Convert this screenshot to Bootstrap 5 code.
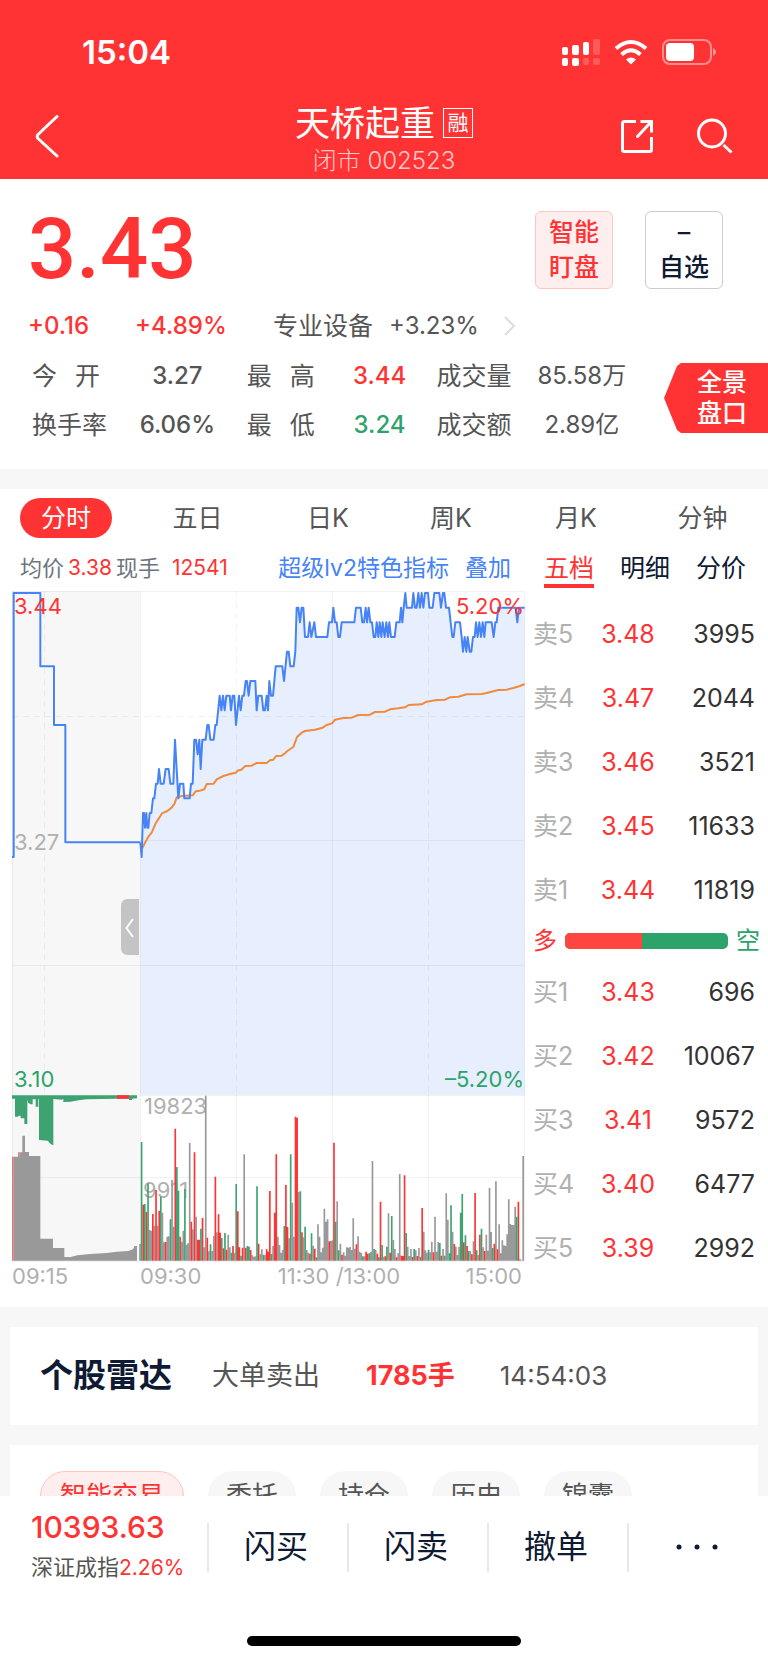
<!DOCTYPE html>
<html lang="zh-CN">
<head>
<meta charset="utf-8">
<meta name="viewport" content="width=device-width, initial-scale=1">
<title>天桥起重 002523</title>
<link href="https://cdn.jsdelivr.net/npm/bootstrap@5.3.0/dist/css/bootstrap.min.css" rel="stylesheet">
<style>
:root { --up: #ff3333; --down: #2ca36a; --ink: #0f1a33; --text: #555; --mute: #b0b0b0; --line-blue: #4683f7; --band: #f7f7f7; }
body { font-family: Inter, "Noto Sans CJK SC", sans-serif; font-size: 24px; line-height: 32px; color: var(--text); background: var(--band); }
a { text-decoration: none; color: inherit; }
button { font: inherit; color: inherit; background: none; border: 0; padding: 0; }
.up { color: var(--up); }
.down { color: var(--down); }
.ink { color: var(--ink); }
.light { font-weight: 300; }

.app-head { background: var(--up); color: #fff; }
.status { height: 102px; padding: 2px 52px 0 82px; }
.clock { font-size: 33px; font-weight: 600; }
.title-bar { height: 77px; padding: 0 35px; display: grid; grid-template-columns: 1fr auto 1fr; align-items: center; }
.title-bar h1 { font-size: 35px; line-height: 40px; font-weight: 400; margin: 0; }
.title-side { padding-bottom: 10px; }
.head-icons { gap: 42px; }
.tag-box { width: 30px; height: 30px; border: 1px solid #fff; font-size: 21px; line-height: 27px; text-align: center; }
.sub-title { color: #ffc9c9; line-height: 36px; }

.quote { padding: 32px 0 20px 28px; }
.price { font-family: Roboto, sans-serif; font-size: 85px; line-height: 76px; font-weight: 500; }
.square-pair { gap: 32px; padding-right: 45px; }
.square { width: 78px; height: 78px; border-radius: 6px; border: 1px solid #ccc; font-size: 25px; line-height: 35px; font-weight: 500; }
.square-red { background: #ffeeee; border-color: #ffc4c4; color: var(--up); }
.trend { height: 51px; margin-top: 11px; }
.trend-a { width: 107px; }
.trend-b { width: 138px; }
.sector { font-size: 25px; }
.facts { width: 100%; table-layout: fixed; }
.facts td, .facts th { padding: 0; height: 49px; font-weight: 400; font-size: 25px; white-space: nowrap; }
.facts .num { text-align: center; font-size: 24px; }
.spread { width: 68px; }
.flag { width: 104px; height: 70px; margin-bottom: 4px; line-height: 31px; font-size: 25px; font-weight: 500; color: #fff; background: var(--up); padding-left: 12px; clip-path: polygon(0 50%, 13px 3px, 17px 0, 100% 0, 100% 100%, 17px 100%, 13px 67px); }

.market { margin-top: 20px; padding-bottom: 17px; }
.period { display: grid; grid-template-columns: 132fr 131fr 130fr 116fr 134fr 119fr 6fr; height: 57px; align-items: center; justify-items: center; font-size: 25px; }
.period .on { background: var(--up); color: #fff; width: 92px; height: 40px; border-radius: 20px; }
.board { display: grid; grid-template-columns: 526fr 242fr; }
.plot { padding-left: 12px; }
.info { height: 44px; font-size: 22px; padding: 0 15px 0 8px; }
.info .up { font-size: 21px; }
.blue { color: var(--line-blue); font-size: 23px; }
.side-tabs { height: 44px; padding: 0 22px 0 18px; font-size: 25px; }
.side-tabs button { height: 42px; padding-top: 6px; border-bottom: 4px solid transparent; }
.side-tabs .on { color: var(--up); border-color: var(--up); }
.book { width: 100%; font-size: 25px; table-layout: fixed; }
.book-sell { margin-top: 12px; }
.book th { width: 66px; padding: 0 0 0 7px; font-weight: 400; color: var(--mute); }
.book td { padding: 0; height: 64px; }
.book .px { width: 72px; text-align: center; color: var(--up); }
.book .qty { text-align: right; padding-right: 13px; color: #333; }
.balance { height: 38px; padding: 0 8px 0 7px; font-size: 24px; }
.balance .progress { height: 16px; border-radius: 5px; background: var(--down); }
.balance .progress-bar { background: #ff4540; }
.chart text { font-size: 22px; fill: var(--mute); }

.panel { background: #fff; margin: 20px 10px 0; }
.radar { height: 98px; padding: 0 30px; font-size: 27px; }
.radar h2 { font-size: 33px; font-weight: 700; margin: 0; }
.radar-kind { margin: 0 46px 0 40px; }
.radar-qty { margin-right: 45px; }
.radar-time { font-size: 26px; }
.chips { padding: 26px 30px 10px; font-size: 26px; gap: 24px; }
.chips button { height: 50px; line-height: 46px; padding: 0 18px; border-radius: 25px; background: var(--band); }
.chips .on { padding: 0 19px; color: var(--up); background: #ffeeee; border: 1px solid #ffc4c4; }
.dock { height: 167px; background: #fff; }
.dock-row { height: 102px; display: grid; grid-template-columns: 207fr 140fr 140fr 140fr 141fr; align-items: center; }
.dock-row button { height: 49px; border-left: 2px solid #e8e8e8; font-size: 32px; line-height: 44px; color: var(--ink); padding-right: 4px; }
.index { padding-left: 31px; font-size: 22px; line-height: 40px; }
.index span { font-size: 21px; }
.index strong { font-size: 30px; font-weight: 500; display: block; }
.home-bar { width: 274px; height: 10px; border-radius: 5px; background: #000; margin: 38px auto 0; }
</style>
</head>
<body>
<header class="app-head">
  <div class="status d-flex align-items-center justify-content-between">
    <span class="clock">15:04</span>
    <svg width="156" height="28" viewBox="560 37 156 28" fill="#fff" aria-hidden="true">
      <rect x="562" y="46" width="6" height="8" rx="2"/><rect x="572" y="44" width="7" height="10" rx="2"/><rect x="583" y="41" width="6" height="13" rx="2"/><rect x="593" y="38" width="7" height="16" rx="2" opacity=".2"/>
      <rect x="562" y="57" width="6" height="8" rx="2"/><rect x="572" y="57" width="7" height="8" rx="2"/><rect x="583" y="57" width="6" height="7" rx="2" opacity=".2"/><rect x="593" y="57" width="7" height="7" rx="2" opacity=".2"/>
      <g fill="none" stroke="#fff" stroke-width="4"><path d="M616 47.500Q631 34.500 646 47.500"/><path d="M621.500 53.500Q631 45 640.500 53.500"/></g>
      <path d="M626 58.500Q631 54.500 636 58.500L631 63.500Z"/>
      <rect x="663" y="39" width="48" height="24" rx="7" fill="none" stroke="#fff" stroke-opacity=".45" stroke-width="2"/>
      <rect x="666" y="42" width="28" height="18" rx="4"/><path d="M713 47q3 1.500 3 4t-3 4z" opacity=".5"/>
    </svg>
  </div>
  <div class="title-bar">
    <div class="title-side"><button type="button" class="d-block" aria-label="返回"><svg class="d-block" width="26" height="44" viewBox="0 0 26 44" fill="none" stroke="#fff" stroke-width="3" stroke-linecap="round" stroke-linejoin="round"><path d="M22 2.500 3 20.500q-1.500 2 0 4L22 42"/></svg></button></div>
    <div class="text-center">
      <div class="d-flex align-items-center gap-2"><h1>天桥起重</h1><span class="tag-box">融</span></div>
      <div class="sub-title light">闭市 002523</div>
    </div>
    <div class="title-side head-icons d-flex justify-content-end align-items-center">
      <button type="button" aria-label="分享"><svg class="d-block" width="34" height="36" viewBox="0 0 34 36" fill="none" stroke="#fff" stroke-width="3"><path d="M16 3.500H4.500Q2.500 3.500 2.500 5.500V31.500Q2.500 33.500 4.500 33.500H29.500Q31.500 33.500 31.500 31.500V19"/><path d="M20.500 3.500H31.500V14.500"/><path d="M31 4 17.500 18.500" stroke-linecap="round"/></svg></button>
      <button type="button" aria-label="搜索"><svg class="d-block" width="37" height="36" viewBox="0 0 37 36" fill="none" stroke="#fff" stroke-width="3"><circle cx="16" cy="15.500" r="13.500"/><path d="M27.500 27 35.500 34.500"/></svg></button>
    </div>
  </div>
</header>

<main>
<section class="quote bg-white">
  <div class="d-flex align-items-start justify-content-between">
    <div class="price up">3.43</div>
    <div class="square-pair d-flex">
      <button type="button" class="square square-red">智能<br>盯盘</button>
      <button type="button" class="square ink">–<br>自选</button>
    </div>
  </div>
  <div class="trend d-flex align-items-center">
    <span class="up fw-medium trend-a">+0.16</span><span class="up fw-medium trend-b">+4.89%</span>
    <a href="#" class="d-flex align-items-center gap-3"><span class="sector">专业设备</span><span>+3.23%</span>
      <svg class="ms-2" width="14" height="22" viewBox="0 0 14 22" fill="none" stroke="#ddd" stroke-width="2"><path d="M2 2 11 11 2 20"/></svg></a>
  </div>
  <div class="d-flex align-items-center">
    <table class="facts ms-1">
      <colgroup><col style="width:12%"><col style="width:22%"><col style="width:12%"><col style="width:18%"><col style="width:12%"><col style="width:22%"><col></colgroup>
      <tr><th scope="row"><span class="spread d-flex justify-content-between"><span>今</span><span>开</span></span></th><td class="num fw-medium">3.27</td><th scope="row"><span class="spread d-flex justify-content-between"><span>最</span><span>高</span></span></th><td class="num fw-medium up">3.44</td><th scope="row">成交量</th><td class="num">85.58万</td><td></td></tr>
      <tr><th scope="row">换手率</th><td class="num fw-medium">6.06%</td><th scope="row"><span class="spread d-flex justify-content-between"><span>最</span><span>低</span></span></th><td class="num fw-medium down">3.24</td><th scope="row">成交额</th><td class="num">2.89亿</td><td></td></tr>
    </table>
    <button type="button" class="flag flex-shrink-0">全景<br>盘口</button>
  </div>
</section>

<section class="bg-white market">
  <nav class="period" aria-label="周期">
    <button type="button" class="on">分时</button><button type="button">五日</button><button type="button">日K</button><button type="button">周K</button><button type="button">月K</button><button type="button">分钟</button>
  </nav>
  <div class="board">
    <div class="plot">
      <div class="info d-flex align-items-center justify-content-between">
        <div class="d-flex gap-1 text-secondary"><span>均价</span><span class="up">3.38</span><span>现手</span><span class="up ms-2">12541</span></div>
        <div class="d-flex gap-3"><a href="#" class="blue">超级lv2特色指标</a><a href="#" class="blue">叠加</a></div>
      </div>
      <svg class="chart d-block w-100" viewBox="12 590 514 700" role="img" aria-label="分时走势">
        <rect x="12" y="591" width="128" height="670" fill="#f7f7f7"/>
        <g transform="translate(0 480) scale(.33333)" fill="none" stroke-linejoin="round">
          <path id="fill" fill="#e7eefe"/>
        </g>
        <g stroke="#000" stroke-opacity=".05" fill="none">
          <path d="M12 591.500H524M12 965.500H524M12 1177.500H524M12 1261.500H524M140 840.500H524"/>
          <path d="M12.500 591V1261M140.500 591V1261M332.500 591V1261M524.500 591V1261M236.500 1095V1261M428.500 1095V1261M140 1095.500H524"/>
          <path d="M44.500 591V1095M236.500 591V1095M428.500 591V1095M12 716.500H524" stroke-dasharray="6 5"/>
        </g>
        <text x="144" y="1114">19823</text><text x="143" y="1198">9911</text>
        <g transform="translate(0 840) scale(.33333)">
          <path fill="#3da371" d="M35 766H411V775L396 776V780H387V776H350L260 778 235 781 212 785 190 786V776L186 779 160 777V916L152 912 143 902 117 900V777H115V800H107V778H98V793H92L84 788 82 778V852H73V835H62V827H55V830H45V776H35Z"/>
          <path fill="#f33" d="M351 766H387V776H351ZM37 950H40V1262H37ZM55 937H58V951H55Z"/>
          <path fill="#999" d="M40 1262V950H58V937H67V887H75V936H87V948H121V1196H159V1224H193V1251H212L232 1246 270 1242 320 1239 350 1235 385 1233 400 1227 403 1218H411V1262Z"/>
          <g id="volume" stroke-width="5"></g>
        </g>
        <g transform="translate(0 480) scale(.33333)" fill="none" stroke-linejoin="round">
          <path stroke="#f28a3c" stroke-width="6" d="M427 1105 435 1088 445 1070 455 1058 467 1030 478 1013 486 1000 502 993 515 983 524 970 530 952 545 948 578 946 587 934 600 932 613 928 620 912 641 911 650 898 670 888 690 882 707 878 715 871 724 869 736 858 755 857 770 849 800 849 810 841 820 839 828 828 845 827 855 820 862 813 880 801 886 785 891 771 905 758 915 753 945 749 968 743 980 735 996 730 1005 719 1030 714 1055 713 1075 705 1110 704 1125 696 1155 695 1170 688 1195 685 1215 682 1226 675 1265 673 1280 665 1310 660 1335 659 1350 652 1375 650 1400 643 1445 642 1460 639 1480 634 1495 630 1520 629 1540 624 1560 618 1574 612"/>
          <path stroke="#4683f7" stroke-width="6" d="M36 1131H41V339H121V559H162V735H196V1087H421"/>
          <path id="line" stroke="#4683f7" stroke-width="6"/>
        </g>
        <path d="M139 899H128Q121 899 121 906V948Q121 955 128 955H139Z" fill="#c4c4c4"/><path d="M133 919 126.500 928 133 937" fill="none" stroke="#fff" stroke-width="2"/>
        <text x="14" y="614" style="fill:var(--up)">3.44</text><text x="14" y="850">3.27</text><text x="14" y="1087" style="fill:var(--down)">3.10</text>
        <text x="524" y="614" text-anchor="end" style="fill:var(--up)">5.20%</text><text x="524" y="1087" text-anchor="end" style="fill:var(--down)">–5.20%</text>
        <text x="12" y="1284">09:15</text><text x="140" y="1284">09:30</text><text x="339" y="1284" text-anchor="middle">11:30 /13:00</text><text x="522" y="1284" text-anchor="end">15:00</text>
      </svg>
    </div>
    <div>
      <div class="side-tabs d-flex justify-content-between ink"><button type="button" class="on">五档</button><button type="button">明细</button><button type="button">分价</button></div>
      <table class="book book-sell">
        <tr><th scope="row">卖5</th><td class="px">3.48</td><td class="qty">3995</td></tr>
        <tr><th scope="row">卖4</th><td class="px">3.47</td><td class="qty">2044</td></tr>
        <tr><th scope="row">卖3</th><td class="px">3.46</td><td class="qty">3521</td></tr>
        <tr><th scope="row">卖2</th><td class="px">3.45</td><td class="qty">11633</td></tr>
        <tr><th scope="row">卖1</th><td class="px">3.44</td><td class="qty">11819</td></tr>
      </table>
      <div class="balance d-flex align-items-center gap-2"><span class="up">多</span><div class="progress flex-grow-1"><div class="progress-bar" style="width:47.500%"></div></div><span class="down">空</span></div>
      <table class="book">
        <tr><th scope="row">买1</th><td class="px">3.43</td><td class="qty">696</td></tr>
        <tr><th scope="row">买2</th><td class="px">3.42</td><td class="qty">10067</td></tr>
        <tr><th scope="row">买3</th><td class="px">3.41</td><td class="qty">9572</td></tr>
        <tr><th scope="row">买4</th><td class="px">3.40</td><td class="qty">6477</td></tr>
        <tr><th scope="row">买5</th><td class="px">3.39</td><td class="qty">2992</td></tr>
      </table>
    </div>
  </div>
</section>

<section class="panel radar d-flex align-items-center">
  <h2 class="ink">个股雷达</h2><span class="radar-kind">大单卖出</span><span class="up fw-bold radar-qty">1785手</span><span class="radar-time">14:54:03</span>
</section>
<section class="panel chips d-flex">
  <button type="button" class="on">智能交易</button><button type="button">委托</button><button type="button">持仓</button><button type="button">历史</button><button type="button">锦囊</button>
</section>
</main>

<footer class="dock fixed-bottom">
  <div class="dock-row">
    <div class="index"><strong class="up">10393.63</strong>深证成指<span class="up">2.26%</span></div>
    <button type="button">闪买</button><button type="button">闪卖</button><button type="button">撤单</button>
    <button type="button" aria-label="更多"><svg class="d-block mx-auto" width="44" height="8" viewBox="0 0 44 8" fill="#0f1a33"><circle cx="4" cy="4" r="2.500"/><circle cx="22" cy="4" r="2.500"/><circle cx="40" cy="4" r="2.500"/></svg></button>
  </div>
  <div class="home-bar"></div>
</footer>
<script src="https://cdn.jsdelivr.net/npm/bootstrap@5.3.0/dist/js/bootstrap.bundle.min.js"></script>
<script>
// Intraday price line: x followed by the y of its price level.
const price = "421 1087 425 1131 429 999 432 999 435 1043 439 999 442 1043 445 1043 449 999 454 999 459 955 463 955 468 911 473 911 477 867 482 911 491 911 497 867 506 867 511 911 520 911 525 779 530 867 535 955 540 911 550 911 553 955 569 955 573 911 578 911 583 779 588 779 593 823 598 779 602 867 607 779 617 779 622 735 626 735 631 779 641 779 646 735 650 735 659 647 664 691 669 647 674 691 679 647 689 647 693 691 698 647 703 647 708 735 717 647 722 691 727 647 732 647 737 603 741 603 746 647 751 603 766 603 770 691 775 647 785 647 790 691 795 691 800 647 804 691 808 603 813 647 819 647 827 559 847 559 852 603 861 515 866 515 871 559 881 559 886 515 890 383 895 383 900 427 905 383 910 383 915 471 924 471 929 427 934 471 943 427 948 471 982 471 987 427 996 427 1000 383 1005 427 1010 427 1015 471 1020 471 1025 427 1063 427 1068 383 1082 383 1087 427 1092 427 1097 383 1101 427 1106 383 1111 427 1116 427 1121 471 1126 471 1130 427 1135 471 1139 427 1144 471 1148 427 1154 471 1159 427 1164 471 1168 427 1173 471 1184 471 1189 427 1199 427 1203 383 1207 427 1211 383 1216 339 1220 383 1236 383 1240 339 1245 383 1250 383 1255 339 1260 383 1265 339 1270 383 1275 339 1284 339 1288 383 1298 383 1303 339 1318 339 1323 383 1329 339 1333 339 1338 383 1347 383 1352 427 1357 471 1361 471 1366 427 1380 427 1385 471 1389 515 1394 471 1399 515 1403 471 1409 515 1414 515 1419 471 1424 471 1428 427 1433 471 1438 427 1443 471 1448 427 1453 471 1457 427 1475 427 1481 471 1486 427 1490 427 1495 383 1547 383 1552 427 1557 383 1574 383";
document.getElementById("line").setAttribute("d", "M" + price);
document.getElementById("fill").setAttribute("d", "M" + price + "V1845H421Z");

// Volume per minute: colour (k flat, r up, g down) and bar top, measured against the session's base.
const sessions = [
  { start: 0, base: 1262, bars: "k1212 g906 r1094 g1092 r1116 g1030 k1170 k1172 r1122 k1157 r1050 k1157 r1112 g1070 k1118 k1207 r1206 k1190 k1189 g1138 k1020 k1160 r866 g981 g1052 r1190 k1205 k1172 g1047 k1214 k1210 k909 r1145 k1168 r937 k1130 r1199 r1199 g1166 r1134 k1222 k767 r1193 k1234 g1213 k1233 k1188 r1010 k1177 r1123 r1178 g1194 r1225 g1179 r1229 k1184 k1222 g1238 r1218 k1238 g1032 r1114 r1222 g1247 r1223 k943 r1223 g1218 g1220 r1230 k1246 k1250 k1249 g1039 r1211 k1243 k1228 g1244 k1244 r1228 r1235 r1053 g1242 k1218 r1118 r943 k1190 k1215 k1238 k1230 g1158 r1035 r1161 k1195 g943 k1088 k1190 r830 r833 k1056 g1054" },
  { start: 101, base: 602, bars: "r517 k532 g500 k570 k578 r581 g520 k557 r566 g592 k493 k530 k577 k563 k446 k485 k478 r544 k543 k541 r248 g485 k424 g571 k551 r584 k577 k587 k562 k563 k561 k570 k475 k566 r553 k529 k575 k579 g589 k589 r575 r581 g580 k576 k303 g567 k570 r581 g592 r425 g555 k590 r589 g560 k460 r578 g468 k540 k567 r592 k580 k342 r587 r588 r346 g519 k560 k588 k567 r591 g567 k571 r588 k564 g590 r444 k515 k571 k578 g569 k577 k545 r577 k470 k575 k546 g549 r587 k567 g587 k400 k479 g580 g436 k515 r552 k560 k585 k560 g458 g402 r547 g526 r558 g573 k573 r583 k544 r399 g571 k585 r524 g506 k562 r573 k524 k572 k384 k516 g564 r551 k364 r568 k493 k580 k541 k556 k558 k523 k418 k492 k495 k495 k440 g470 r425 k597 k601 k288" }
];
const paths = { k: "", r: "", g: "" };
for (const s of sessions) {
  s.bars.split(" ").forEach((bar, i) => {
    const x = 420 + 4.81 * (s.start + i);
    paths[bar[0]] += `M${x.toFixed(1)} 1262v-${s.base - Number(bar.slice(1))}`;
  });
}
const tones = { k: "#999", r: "#ff3333", g: "#3da371" };
document.getElementById("volume").innerHTML =
  Object.keys(paths).map(c => `<path d="${paths[c]}" stroke="${tones[c]}"/>`).join("");
</script>
</body>
</html>
